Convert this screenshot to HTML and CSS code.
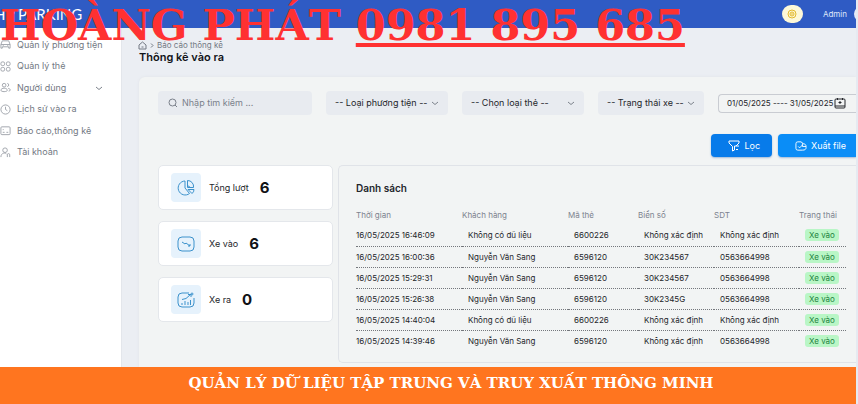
FILE: index.html
```html
<!DOCTYPE html>
<html lang="vi">
<head>
    <meta charset="UTF-8">
    <meta name="viewport" content="width=device-width, initial-scale=1.0">
    <title>Thống kê vào ra</title>
    <link rel="stylesheet" href="styles.css">
</head>
<body>
    <div class="page">
        <header class="topbar">
            <span class="brand">HP PARKING</span>
            <div class="account">
                <button class="theme" aria-label="Giao diện">
                    <svg width="10" height="10" viewBox="0 0 10 10"><circle cx="5" cy="5" r="4"/><circle cx="5" cy="5" r="2"/><path d="M5 4v2"/></svg>
                </button>
                <span>Admin</span>
                <span class="avatar"></span>
            </div>
        </header>
        <div class="hotline">HOÀNG PHÁT <a href="tel:0981895685">0981 895 685</a></div>

        <div class="layout">
            <div class="sidebar">
                <nav class="menu">
                    <a href="#">
                        <svg class="icon" viewBox="0 0 12 12"><path d="M1 6l1.500-4h7L11 6v4H9.500V8.500h-7V10H1zM1 6h10M3 7.200h1M8 7.200h1"/></svg>
                        Quản lý phương tiện
                    </a>
                    <a href="#">
                        <svg class="icon" viewBox="0 0 12 12"><rect x="1" y="1" width="4" height="4" rx="1.500"/><rect x="7" y="1" width="4" height="4" rx="1.500"/><rect x="1" y="7" width="4" height="4" rx="1.500"/><rect x="7" y="7" width="4" height="4" rx="1.500"/></svg>
                        Quản lý thẻ
                    </a>
                    <a href="#">
                        <svg class="icon" viewBox="0 0 12 12"><circle cx="4.500" cy="3.500" r="2"/><path d="M1 9c0-3 7-3 7 0 0 2-7 2-7 0zM8 1.500c2 0 2 3.500 0 3.500M9 7c3 .3 2.500 3 .5 3"/></svg>
                        Người dùng
                        <svg class="chevron" viewBox="0 0 8 8"><path d="M1 3l3 2.500L7 3"/></svg>
                    </a>
                    <a href="#">
                        <svg class="icon" viewBox="0 0 12 12"><circle cx="6" cy="6" r="5"/><path d="M6 3v3l2 1.300"/></svg>
                        Lịch sử vào ra
                    </a>
                    <a href="#">
                        <svg class="icon" viewBox="0 0 12 12"><rect x="1" y="2" width="10" height="8.500" rx="1"/><path d="M3 5h1M3 8h2M7 8h2"/></svg>
                        Báo cáo,thông kê
                    </a>
                    <a href="#">
                        <svg class="icon" viewBox="0 0 12 12"><circle cx="5.500" cy="3.500" r="2.500"/><path d="M1 11c0-5 5-5 6-3.500M8 11V8.500a1.300 1.300 0 0 1 2.600 0V11"/></svg>
                        Tài khoản
                    </a>
                </nav>
            </div>

            <main class="content">
                <div class="breadcrumb">
                    <svg viewBox="0 0 9 9"><path d="M1 4l3.500-3L8 4v4H1zM3.500 6h2"/></svg>
                    <svg class="arrow" viewBox="0 0 4 8"><path d="M1 2l2 2-2 2"/></svg>
                    <a href="#">Báo cáo thông kê</a>
                </div>
                <h1>Thông kê vào ra</h1>

                <section class="panel">
                    <form class="filters">
                        <label class="search">
                            <svg viewBox="0 0 10 10"><circle cx="4.500" cy="4.500" r="3.500"/><path d="M7 7l2 2"/></svg>
                            <input type="text" placeholder="Nhập tìm kiếm ..." aria-label="Tìm kiếm">
                        </label>
                        <div class="select vehicle">
                            <select aria-label="Loại phương tiện"><option>-- Loại phương tiện --</option></select>
                            <svg class="chevron" viewBox="0 0 8 8"><path d="M1 3l3 2.500L7 3"/></svg>
                        </div>
                        <div class="select card-type">
                            <select aria-label="Loại thẻ"><option>-- Chọn loại thẻ --</option></select>
                            <svg class="chevron" viewBox="0 0 8 8"><path d="M1 3l3 2.500L7 3"/></svg>
                        </div>
                        <div class="select status">
                            <select aria-label="Trạng thái xe"><option>-- Trạng thái xe --</option></select>
                            <svg class="chevron" viewBox="0 0 8 8"><path d="M1 3l3 2.500L7 3"/></svg>
                        </div>
                        <label class="dates">
                            <input type="text" value="01/05/2025 ---- 31/05/2025" aria-label="Khoảng ngày">
                            <svg viewBox="0 0 12 12"><rect x="1" y="2" width="10" height="9" rx="1"/><path d="M1 9h10M3.500 1v2M8.500 1v2M6 4v3M4.500 5.500h3"/></svg>
                        </label>
                    </form>

                    <div class="actions">
                        <button class="btn">
                            <svg viewBox="0 0 12 12"><path d="M1 1h10v2L8 6M1 1v2l3.500 3.500V11l2-1V6H11M8 9.500h2"/></svg>
                            Lọc
                        </button>
                        <button class="btn export">
                            <svg viewBox="0 0 13 12"><path d="M8 10.500H3a2 2 0 0 1-2-2v-5a2 2 0 0 1 2-2h3.500l2.500 2M3.500 6.500l1.500 1.500 3-3M8 3.500c4 0 4 2 4 4s-1 3-4 3M8 3.500v3h4"/></svg>
                            Xuất file
                        </button>
                    </div>

                    <div class="report">
                        <div class="stats">
                            <div class="stat">
                                <span class="stat-icon"><svg viewBox="0 0 18 18"><path d="M8 2a7 7 0 1 0 4.500 12.500L8 9zM10.500 1.500v7h6a6 6 0 0 0-6-7zM11 10.500h6a5 5 0 0 1-2 4zM10.500 6.500l3 2"/></svg></span>
                                <span>Tổng lượt</span>
                                <strong>6</strong>
                            </div>
                            <div class="stat">
                                <span class="stat-icon"><svg viewBox="0 0 18 18"><rect x="1" y="2" width="16" height="14" rx="4"/><path d="M5 7l3 2 1-1 4 3M13 9v2h-2"/></svg></span>
                                <span>Xe vào</span>
                                <strong>6</strong>
                            </div>
                            <div class="stat">
                                <span class="stat-icon"><svg viewBox="0 0 18 18"><path d="M12 2H5a4 4 0 0 0-4 4v6a4 4 0 0 0 4 4h8a4 4 0 0 0 4-4V7M5 14v-2M8 14v-4M11 14v-3M13.500 14V9M5 8.500l4-1 4.500-4M11 3.500h3V6"/><circle cx="15" cy="3" r="1"/></svg></span>
                                <span>Xe ra</span>
                                <strong>0</strong>
                            </div>
                        </div>

                        <div class="list">
                            <h2>Danh sách</h2>
                            <table>
                                <colgroup>
                                    <col class="col-time"><col class="col-customer"><col class="col-code"><col class="col-plate"><col class="col-phone"><col class="col-status">
                                </colgroup>
                                <thead>
                                    <tr><th>Thời gian</th><th>Khách hàng</th><th>Mã thẻ</th><th>Biển số</th><th>SDT</th><th>Trạng thái</th></tr>
                                </thead>
                                <tbody>
                                    <tr><td>16/05/2025 16:46:09</td><td>Không có dũ liệu</td><td>6600226</td><td>Không xác định</td><td>Không xác định</td><td><span class="badge">Xe vào</span></td></tr>
                                    <tr><td>16/05/2025 16:00:36</td><td>Nguyễn Văn Sang</td><td>6596120</td><td>30K234567</td><td>0563664998</td><td><span class="badge">Xe vào</span></td></tr>
                                    <tr><td>16/05/2025 15:29:31</td><td>Nguyễn Văn Sang</td><td>6596120</td><td>30K234567</td><td>0563664998</td><td><span class="badge">Xe vào</span></td></tr>
                                    <tr><td>16/05/2025 15:26:38</td><td>Nguyễn Văn Sang</td><td>6596120</td><td>30K2345G</td><td>0563664998</td><td><span class="badge">Xe vào</span></td></tr>
                                    <tr><td>16/05/2025 14:40:04</td><td>Không có dũ liệu</td><td>6600226</td><td>Không xác định</td><td>Không xác định</td><td><span class="badge">Xe vào</span></td></tr>
                                    <tr><td>16/05/2025 14:39:46</td><td>Nguyễn Văn Sang</td><td>6596120</td><td>Không xác định</td><td>0563664998</td><td><span class="badge">Xe vào</span></td></tr>
                                </tbody>
                            </table>
                        </div>
                    </div>
                </section>
            </main>
        </div>

        <footer class="banner">QUẢN LÝ DỮ LIỆU TẬP TRUNG VÀ TRUY XUẤT THÔNG MINH</footer>
    </div>
</body>
</html>
```
FILE: styles.css
```css
* {
    box-sizing: border-box;
}

body {
    margin: 0;
    background-color: #e6eaf1;
    font-family: Inter, "Liberation Sans", sans-serif;
    font-size: 9px;
    line-height: 12px;
    color: #24262b;
}

a {
    color: inherit;
    text-decoration: none;
}

svg {
    fill: none;
    stroke: currentColor;
    flex-shrink: 0;
}

input,
select,
button {
    font: inherit;
    color: inherit;
    border: none;
    background: none;
    padding: 0;
    margin: 0;
    min-width: 0;
    outline: none;
}

.page {
    position: relative;
    display: flex;
    flex-direction: column;
    min-height: 100vh;
    margin-right: 2px;
    overflow: hidden;
}

.topbar {
    display: flex;
    align-items: center;
    justify-content: space-between;
    height: 28px;
    background-color: #2f5bc4;
    color: #fff;
}

.brand {
    margin-left: -6px;
    font-family: Lato, sans-serif;
    font-size: 15px;
}

.account {
    display: flex;
    align-items: center;
    font-size: 8px;
    margin-right: -14px;
    color: #dfe7fa;
}

.theme {
    display: flex;
    align-items: center;
    justify-content: center;
    width: 21px;
    height: 18px;
    margin-right: 20px;
    border-radius: 9px;
    background-color: #fdf8d8;
    color: #e3b92c;
}

.avatar {
    width: 16px;
    height: 16px;
    margin-left: 7px;
    border-radius: 50%;
    background-color: #e5ebf8;
}

/* phone number over the top of the page */
.hotline {
    position: absolute;
    top: 0;
    left: 0;
    font-family: "DejaVu Serif", serif;
    font-size: 43px;
    line-height: 50px;
    font-weight: bold;
    font-kerning: none;
    color: #ff3131;
    white-space: nowrap;
}

.hotline a {
    text-decoration: underline;
}

.layout {
    display: flex;
    flex: 1;
}

.sidebar {
    width: 122px;
    flex-shrink: 0;
    padding: 6px 18px 0 0;
    background-color: #fff;
    border-right: 1px solid #e3e6eb;
    color: #737983;
}

.menu {
    display: flex;
    flex-direction: column;
    height: 129px;
}

.menu a {
    display: flex;
    align-items: center;
    flex: 1;
    gap: 6px;
    white-space: nowrap;
}

.icon {
    width: 11px;
    height: 11px;
    stroke: #9ca1a9;
}

.chevron {
    width: 8px;
    height: 8px;
    margin-left: auto;
    stroke: #7d838c;
}

.content {
    display: flex;
    flex-direction: column;
    flex: 1;
    min-width: 0;
    padding: 11px 0 0 16px;
    background-color: #ebeef3;
}

.breadcrumb {
    display: flex;
    align-items: center;
    gap: 3px;
    font-size: 8px;
    color: #737983;
}

.breadcrumb svg {
    width: 9px;
    height: 9px;
}

.breadcrumb .arrow {
    width: 4px;
}

h1 {
    margin: 0 0 13px 1px;
    font-size: 11px;
    line-height: 13px;
    font-weight: 600;
    color: #111318;
}

.panel {
    flex: 1;
    margin-left: 1px;
    padding: 14px 0 3px 19px;
    border-radius: 6px 0 0 0;
    background-color: #f2f4f4;
    box-shadow: 0 0 3px #dfe2e8;
}

.filters {
    display: flex;
    align-items: center;
    gap: 14px;
}

.search,
.select {
    position: relative;
    display: flex;
    align-items: center;
    height: 24px;
    min-width: 0;
    border-radius: 4px;
    background-color: #e8ebf0;
}

.search {
    flex: 1 1 154px;
    gap: 4px;
    padding: 0 10px;
    color: #7b818b;
}

.search svg {
    width: 10px;
    height: 10px;
}

.search input {
    width: 100%;
}

.search input::placeholder {
    color: #7b818b;
}

.vehicle,
.card-type {
    flex: 1 1 122px;
}

.status {
    flex: 1 1 106px;
}

.select select {
    appearance: none;
    width: 100%;
    height: 24px;
    padding: 0 12px 0 9px;
}

.select .chevron {
    position: absolute;
    right: 9px;
    pointer-events: none;
}

.dates {
    display: flex;
    align-items: center;
    flex: 1 1 138px;
    min-width: 0;
    height: 19px;
    padding: 0 10px 0 8px;
    border: 1px solid #c9ccd2;
    border-right: none;
    border-radius: 4px 0 0 4px;
    font-size: 8px;
}

.dates input {
    flex: 1;
    width: 100px;
}

.dates svg {
    width: 12px;
    height: 12px;
}

.actions {
    display: flex;
    justify-content: flex-end;
    gap: 6px;
    margin: 19px 0 8px;
}

.btn {
    display: flex;
    align-items: center;
    gap: 4px;
    height: 23px;
    padding: 0 12px 0 17px;
    border-radius: 4px;
    background-color: #077bea;
    box-shadow: 0 1px 2px #9fb9d8;
    color: #fff;
    cursor: pointer;
}

.btn svg {
    width: 12px;
    height: 12px;
}

.export {
    padding-right: 10px;
    border-radius: 4px 0 0 4px;
    background-color: #0a8df7;
}

.report {
    display: flex;
    align-items: flex-start;
    gap: 5px;
}

.stats {
    display: flex;
    flex-direction: column;
    flex: 1 1 175px;
    gap: 11px;
}

.stat {
    display: flex;
    align-items: center;
    height: 45px;
    padding-left: 12px;
    border: 1px solid #e4e7eb;
    border-radius: 5px;
    background-color: #fff;
}

.stat strong {
    margin-left: 11px;
    font-size: 15px;
    font-weight: 700;
    color: #101216;
}

.stat-icon {
    display: flex;
    align-items: center;
    justify-content: center;
    width: 30px;
    height: 29px;
    margin-right: 8px;
    border-radius: 4px;
    background-color: #e6f2fc;
    color: #3c92cc;
}

.stat-icon svg {
    width: 18px;
    height: 18px;
}

.list {
    flex: 1 1 518px;
    min-width: 0;
    padding: 15px 10px 11px 17px;
    border: 1px solid #e0e3e8;
    border-right: none;
    border-radius: 5px 0 0 5px;
}

h2 {
    margin: 0 0 10px;
    font-size: 10px;
    line-height: 14px;
    font-weight: 600;
}

table {
    width: 100%;
    table-layout: fixed;
    border-collapse: collapse;
    font-size: 8px;
    white-space: nowrap;
}

.col-time,
.col-customer {
    width: 106px;
}

.col-code {
    width: 70px;
}

.col-plate {
    width: 76px;
}

.col-phone {
    width: 85px;
}

.col-status {
    width: 47px;
}

th {
    height: 20px;
    padding: 0;
    font-weight: 400;
    text-align: left;
    color: #7d838f;
}

td {
    height: 21px;
    padding: 0 0 0 6px;
}

td:first-child {
    padding-left: 0;
}

tbody tr + tr td {
    border-top: 1px dotted #74777c;
}

.badge {
    display: inline-block;
    padding: 0 4px;
    border-radius: 3px;
    background-color: #b9f6c6;
    color: #23843f;
}

.banner {
    height: 37px;
    padding-left: 46px;
    background-color: #ff751f;
    font-family: "DejaVu Serif", serif;
    font-size: 15px;
    line-height: 33px;
    font-weight: bold;
    font-kerning: none;
    text-align: center;
    color: #fff;
    white-space: nowrap;
}
```
